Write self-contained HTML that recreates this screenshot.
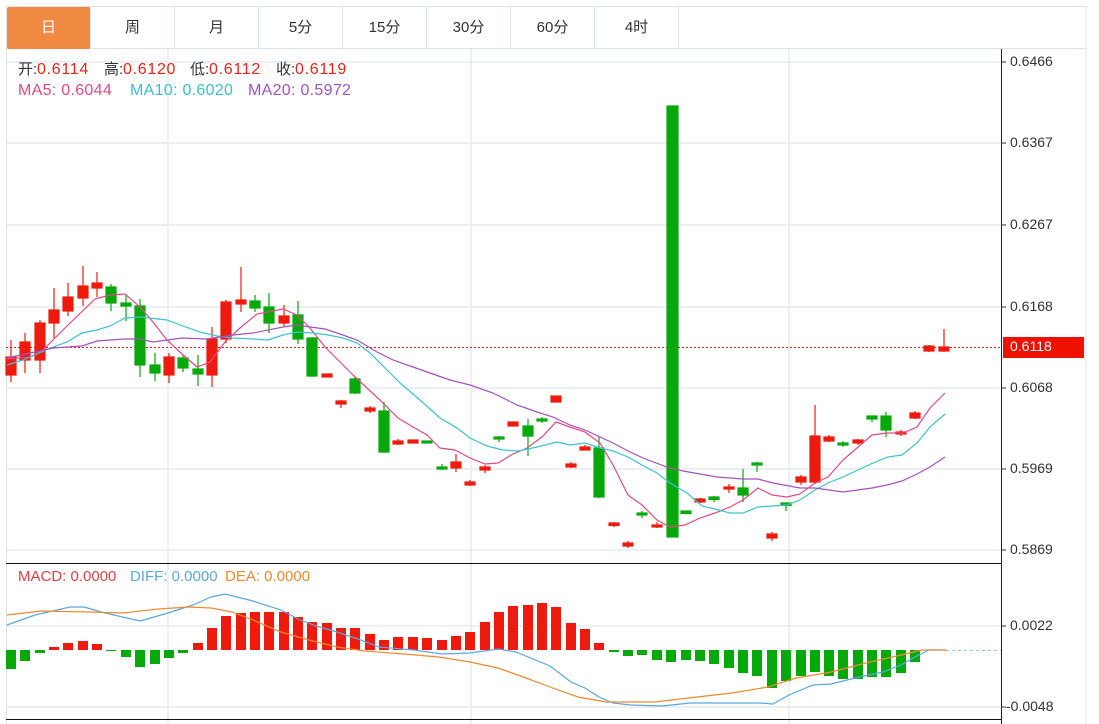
<!DOCTYPE html>
<html><head><meta charset="utf-8"><style>
*{margin:0;padding:0;box-sizing:border-box}
body{width:1099px;height:724px;background:#fff;overflow:hidden;font-family:"Liberation Sans","Noto Sans CJK SC",sans-serif;position:relative}
.tabs{position:absolute;left:6px;top:6px;width:1080px;height:43px;border-top:1px solid #dde2e8;border-bottom:1px solid #dde2e8;border-left:1px solid #dde2e8;}
.tab{position:absolute;top:0;height:42px;width:84px;border-right:1px solid #dde2e8;text-align:center;line-height:42px;font-size:15px;color:#333}
.tab.on{background:#f08a42;color:#fff;border-radius:2px}
.t{position:absolute;font-size:16px;white-space:nowrap;line-height:18px}
.r{color:#e8241a}.k{color:#333;font-size:15px}
.ax{position:absolute;left:1010px;font-size:14px;color:#333}
</style></head><body>
<div class="tabs">
<div class="tab on" style="left:0">日</div>
<div class="tab" style="left:84px">周</div>
<div class="tab" style="left:168px">月</div>
<div class="tab" style="left:252px">5分</div>
<div class="tab" style="left:336px">15分</div>
<div class="tab" style="left:420px">30分</div>
<div class="tab" style="left:504px">60分</div>
<div class="tab" style="left:588px">4时</div>
</div>
<svg width="1099" height="724" style="position:absolute;left:0;top:0" xmlns="http://www.w3.org/2000/svg">
<g stroke="#e6ecf2" stroke-width="1.5">
<line x1="6" y1="62" x2="1001" y2="62"/><line x1="6" y1="143" x2="1001" y2="143"/><line x1="6" y1="225" x2="1001" y2="225"/><line x1="6" y1="307" x2="1001" y2="307"/><line x1="6" y1="388" x2="1001" y2="388"/><line x1="6" y1="469" x2="1001" y2="469"/><line x1="6" y1="550" x2="1001" y2="550"/>
<line x1="6" y1="626" x2="1001" y2="626"/><line x1="6" y1="707" x2="1001" y2="707"/>
<line x1="168" y1="49" x2="168" y2="724"/><line x1="471" y1="49" x2="471" y2="724"/><line x1="789" y1="49" x2="789" y2="724"/>
</g>
<line x1="6.5" y1="49" x2="6.5" y2="724" stroke="#dde2e8"/>
<line x1="1086" y1="6" x2="1086" y2="724" stroke="#dde2e8"/>
<line x1="6" y1="563.5" x2="1001" y2="563.5" stroke="#111"/>
<line x1="6" y1="719.5" x2="1001" y2="719.5" stroke="#111"/>
<line x1="1001.5" y1="49" x2="1001.5" y2="724" stroke="#222"/>
<g stroke="#333"><line x1="1001" y1="62" x2="1006" y2="62"/><line x1="1001" y1="143" x2="1006" y2="143"/><line x1="1001" y1="225" x2="1006" y2="225"/><line x1="1001" y1="307" x2="1006" y2="307"/><line x1="1001" y1="388" x2="1006" y2="388"/><line x1="1001" y1="469" x2="1006" y2="469"/><line x1="1001" y1="550" x2="1006" y2="550"/><line x1="1001" y1="626" x2="1006" y2="626"/><line x1="1001" y1="707" x2="1006" y2="707"/></g>
<line x1="6" y1="347.5" x2="1001" y2="347.5" stroke="#e02020" stroke-dasharray="2,2"/>
<rect x="1003" y="337" width="81" height="21" fill="#ee1100"/>
<g stroke-width="1.2">
<g fill="#ee1a0e" stroke="#ee1a0e">
<line x1="11" y1="340" x2="11" y2="382"/><rect x="6" y="357" width="10" height="18"/>
<line x1="25" y1="333" x2="25" y2="373"/><rect x="20" y="342" width="10" height="18"/>
<line x1="40" y1="320" x2="40" y2="373"/><rect x="35" y="323" width="10" height="37"/>
<line x1="54" y1="288" x2="54" y2="338"/><rect x="49" y="310" width="10" height="13"/>
<line x1="68" y1="283" x2="68" y2="316"/><rect x="63" y="297" width="10" height="14"/>
<line x1="83" y1="266" x2="83" y2="306"/><rect x="78" y="286" width="10" height="12"/>
<line x1="97" y1="272" x2="97" y2="297"/><rect x="92" y="283" width="10" height="5"/>
<line x1="169" y1="353" x2="169" y2="383"/><rect x="164" y="357" width="10" height="18"/>
<line x1="212" y1="327" x2="212" y2="387"/><rect x="207" y="339" width="10" height="36"/>
<line x1="226" y1="300" x2="226" y2="343"/><rect x="221" y="302" width="10" height="37"/>
<line x1="241" y1="267" x2="241" y2="312"/><rect x="236" y="300" width="10" height="4"/>
<line x1="284" y1="305" x2="284" y2="326"/><rect x="279" y="316" width="10" height="7"/>
<rect x="322" y="374" width="10" height="3"/>
<line x1="341" y1="400" x2="341" y2="408"/><rect x="336" y="401" width="10" height="3"/>
<line x1="370" y1="406" x2="370" y2="413"/><rect x="365" y="408" width="10" height="3"/>
<line x1="398" y1="439" x2="398" y2="445"/><rect x="393" y="441" width="10" height="3"/>
<rect x="408" y="440" width="10" height="3"/>
<line x1="456" y1="454" x2="456" y2="472"/><rect x="451" y="462" width="10" height="6"/>
<line x1="470" y1="480" x2="470" y2="486"/><rect x="465" y="482" width="10" height="3"/>
<line x1="485" y1="465" x2="485" y2="473"/><rect x="480" y="467" width="10" height="3"/>
<rect x="508" y="422" width="10" height="4"/>
<rect x="551" y="396" width="10" height="6"/>
<line x1="571" y1="462" x2="571" y2="468"/><rect x="566" y="464" width="10" height="3"/>
<line x1="585" y1="445" x2="585" y2="450"/><rect x="580" y="447" width="10" height="3"/>
<line x1="614" y1="522" x2="614" y2="527"/><rect x="609" y="523" width="10" height="2.5"/>
<line x1="628" y1="541" x2="628" y2="548"/><rect x="623" y="543" width="10" height="3"/>
<line x1="657" y1="522" x2="657" y2="528"/><rect x="652" y="525" width="10" height="2"/>
<line x1="700" y1="498" x2="700" y2="503"/><rect x="695" y="499" width="10" height="3"/>
<line x1="729" y1="484" x2="729" y2="493"/><rect x="724" y="487" width="10" height="2"/>
<line x1="772" y1="532" x2="772" y2="541"/><rect x="767" y="534" width="10" height="4"/>
<line x1="801" y1="475" x2="801" y2="485"/><rect x="796" y="477" width="10" height="5"/>
<line x1="815" y1="405" x2="815" y2="484"/><rect x="810" y="436" width="10" height="46"/>
<line x1="829" y1="435" x2="829" y2="442"/><rect x="824" y="437" width="10" height="4"/>
<line x1="858" y1="439" x2="858" y2="445"/><rect x="853" y="440" width="10" height="3"/>
<line x1="901" y1="430" x2="901" y2="436"/><rect x="896" y="432" width="10" height="2"/>
<line x1="915" y1="411" x2="915" y2="419"/><rect x="910" y="413" width="10" height="5"/>
<line x1="929" y1="345" x2="929" y2="352"/><rect x="924" y="346" width="10" height="5"/>
<line x1="944" y1="329" x2="944" y2="352"/><rect x="939" y="347" width="10" height="4"/>
</g>
<g fill="#06a80a" stroke="#06a80a">
<line x1="111" y1="284" x2="111" y2="311"/><rect x="106" y="287" width="10" height="16"/>
<line x1="126" y1="295" x2="126" y2="321"/><rect x="121" y="303" width="10" height="3"/>
<line x1="140" y1="299" x2="140" y2="377"/><rect x="135" y="306" width="10" height="59"/>
<line x1="155" y1="353" x2="155" y2="381"/><rect x="150" y="365" width="10" height="8"/>
<line x1="183" y1="355" x2="183" y2="372"/><rect x="178" y="358" width="10" height="10"/>
<line x1="198" y1="355" x2="198" y2="386"/><rect x="193" y="369" width="10" height="5"/>
<line x1="255" y1="295" x2="255" y2="312"/><rect x="250" y="301" width="10" height="7"/>
<line x1="269" y1="293" x2="269" y2="333"/><rect x="264" y="307" width="10" height="16"/>
<line x1="298" y1="301" x2="298" y2="344"/><rect x="293" y="315" width="10" height="24"/>
<line x1="312" y1="337" x2="312" y2="377"/><rect x="307" y="338" width="10" height="38"/>
<line x1="355" y1="377" x2="355" y2="394"/><rect x="350" y="379" width="10" height="14"/>
<line x1="384" y1="402" x2="384" y2="453"/><rect x="379" y="411" width="10" height="41"/>
<rect x="422" y="441" width="10" height="2"/>
<line x1="442" y1="464" x2="442" y2="470"/><rect x="437" y="467" width="10" height="2"/>
<line x1="499" y1="436" x2="499" y2="442"/><rect x="494" y="437" width="10" height="2"/>
<line x1="528" y1="419" x2="528" y2="456"/><rect x="523" y="426" width="10" height="10"/>
<line x1="542" y1="417" x2="542" y2="423"/><rect x="537" y="419" width="10" height="2"/>
<line x1="599" y1="437" x2="599" y2="498"/><rect x="594" y="448" width="10" height="49"/>
<line x1="642" y1="511" x2="642" y2="518"/><rect x="637" y="513" width="10" height="2"/>
<rect x="667" y="106" width="11" height="431"/>
<rect x="681" y="511" width="10" height="2.5"/>
<line x1="714" y1="496" x2="714" y2="502"/><rect x="709" y="497" width="10" height="2.5"/>
<line x1="743" y1="469" x2="743" y2="502"/><rect x="738" y="488" width="10" height="7"/>
<line x1="757" y1="462" x2="757" y2="472"/><rect x="752" y="463" width="10" height="2"/>
<line x1="786" y1="503" x2="786" y2="511"/><rect x="781" y="503" width="10" height="2.5"/>
<line x1="843" y1="441" x2="843" y2="447"/><rect x="838" y="443" width="10" height="2"/>
<line x1="872" y1="416" x2="872" y2="422"/><rect x="867" y="416" width="10" height="3"/>
<line x1="886" y1="412" x2="886" y2="437"/><rect x="881" y="416" width="10" height="14"/>
</g>
</g>
<g fill="none" stroke-width="1.2">
<polyline stroke="#e04a82" points="7,359 30,357 43,350 68,325 95,299 110,295 125,294 140,307 153,322 167,340 182,354 197,367 210,362 225,342 240,328 257,314 268,312 283,309 297,315 310,328 325,347 340,362 353,375 367,388 383,403 398,418 413,427 427,435 440,448 455,450 470,458 485,464 498,463 513,454 527,448 542,437 556,422 570,427 585,432 600,443 613,465 628,495 642,505 657,520 670,527 685,525 700,518 715,513 730,507 743,500 758,488 772,495 787,497 800,494 815,483 828,477 843,460 857,448 872,435 887,433 903,433 917,427 930,408 945,393"/>
<polyline stroke="#3cc2d2" points="7,365 23,360 53,347 67,342 82,333 97,330 110,326 125,318 140,317 167,320 183,326 200,332 217,336 233,338 253,339 268,340 283,335 297,332 313,333 328,335 343,338 357,343 370,353 387,370 400,383 420,400 440,418 457,428 470,438 487,446 503,450 518,451 537,447 557,442 570,445 585,443 600,448 613,451 628,457 642,465 657,473 670,483 687,493 702,506 715,509 730,513 743,513 758,507 787,505 800,500 815,490 828,483 843,477 858,470 873,463 888,457 902,455 917,443 930,427 945,414"/>
<polyline stroke="#a452bc" points="7,358 53,348 82,346 97,341 125,339 140,339 153,342 182,338 207,339 233,335 253,333 283,327 297,325 310,327 325,329 340,334 357,340 377,352 393,360 413,367 450,380 470,385 493,393 517,405 537,412 553,417 570,425 585,430 600,437 613,443 628,451 643,458 667,467 683,471 700,474 717,477 743,479 758,479 773,483 800,488 815,488 843,492 872,488 887,485 902,481 917,474 930,467 945,457"/>
</g>
<g fill="#ee1a0e">
<rect x="49" y="647" width="10" height="3"/><rect x="63" y="643" width="10" height="7"/><rect x="78" y="641" width="10" height="9"/><rect x="92" y="644" width="10" height="6"/>
<rect x="193" y="643" width="10" height="7"/><rect x="207" y="628" width="10" height="22"/><rect x="221" y="616" width="10" height="34"/><rect x="236" y="613" width="10" height="37"/><rect x="250" y="612" width="10" height="38"/><rect x="264" y="612" width="10" height="38"/><rect x="279" y="612" width="10" height="38"/><rect x="293" y="617" width="10" height="33"/><rect x="307" y="622" width="10" height="28"/><rect x="322" y="623" width="10" height="27"/><rect x="336" y="628" width="10" height="22"/><rect x="350" y="628" width="10" height="22"/><rect x="365" y="634" width="10" height="16"/><rect x="379" y="640" width="10" height="10"/><rect x="393" y="637" width="10" height="13"/><rect x="408" y="637" width="10" height="13"/><rect x="422" y="638" width="10" height="12"/><rect x="437" y="640" width="10" height="10"/><rect x="451" y="636" width="10" height="14"/><rect x="465" y="632" width="10" height="18"/><rect x="480" y="622" width="10" height="28"/><rect x="494" y="612" width="10" height="38"/><rect x="508" y="606" width="10" height="44"/><rect x="523" y="605" width="10" height="45"/><rect x="537" y="603" width="10" height="47"/><rect x="551" y="607" width="10" height="43"/><rect x="566" y="623" width="10" height="27"/><rect x="580" y="629" width="10" height="21"/><rect x="594" y="643" width="10" height="7"/>
</g>
<g fill="#06a80a">
<rect x="6" y="650" width="10" height="19"/><rect x="20" y="650" width="10" height="11"/><rect x="35" y="650" width="10" height="3"/><rect x="106" y="650" width="10" height="1"/><rect x="121" y="650" width="10" height="7"/><rect x="135" y="650" width="10" height="17"/><rect x="150" y="650" width="10" height="14"/><rect x="164" y="650" width="10" height="8"/><rect x="178" y="650" width="10" height="3"/>
<rect x="609" y="650" width="10" height="2"/><rect x="623" y="650" width="10" height="6"/><rect x="637" y="650" width="10" height="5"/><rect x="652" y="650" width="10" height="10"/><rect x="666" y="650" width="10" height="12"/><rect x="681" y="650" width="10" height="10"/><rect x="695" y="650" width="10" height="11"/><rect x="709" y="650" width="10" height="14"/><rect x="724" y="650" width="10" height="18"/><rect x="738" y="650" width="10" height="23"/><rect x="752" y="650" width="10" height="26"/><rect x="767" y="650" width="10" height="38"/><rect x="781" y="650" width="10" height="31"/><rect x="796" y="650" width="10" height="26"/><rect x="810" y="650" width="10" height="22"/><rect x="824" y="650" width="10" height="26"/><rect x="838" y="650" width="10" height="29"/><rect x="853" y="650" width="10" height="29"/><rect x="867" y="650" width="10" height="27"/><rect x="881" y="650" width="10" height="27"/><rect x="896" y="650" width="10" height="23"/><rect x="910" y="650" width="10" height="12"/>
</g>
<line x1="946" y1="650.5" x2="1001" y2="650.5" stroke="#8cc4ec" stroke-dasharray="3,3"/>
<g fill="none" stroke-width="1.2">
<polyline stroke="#5aa8e2" points="7,625 35,615 70,607 84,607 105,613 140,621 168,613 193,605 211,597 225,594 253,601 281,610 298,619 316,626 337,632 358,639 379,647 414,650 442,654 470,653 498,649 516,652 550,666 571,682 585,688 599,697 613,703 631,705 662,706 690,703 725,703 760,703 773,704 789,695 813,685 831,684 855,678 883,672 901,665 915,657 929,650 946,650"/>
<polyline stroke="#f08a30" points="7,615 42,611 88,612 123,613 158,609 189,607 211,608 232,612 253,620 281,632 309,640 337,647 365,651 404,654 439,657 470,662 498,668 526,678 550,687 578,697 606,702 655,702 697,697 732,693 768,687 796,678 831,672 866,663 901,655 922,650 946,650"/>
</g>
</svg>
<div class="t k" style="left:18px;top:61px">开:</div><div class="t r" style="left:37px;top:61px;letter-spacing:0.7px">0.6114</div>
<div class="t k" style="left:104px;top:61px">高:</div><div class="t r" style="left:123px;top:61px;letter-spacing:0.7px">0.6120</div>
<div class="t k" style="left:190px;top:61px">低:</div><div class="t r" style="left:209px;top:61px;letter-spacing:0.7px">0.6112</div>
<div class="t k" style="left:276px;top:61px">收:</div><div class="t r" style="left:295px;top:61px;letter-spacing:0.7px">0.6119</div>
<div class="t" style="left:18px;top:82px;color:#e04a82;letter-spacing:0.3px">MA5: 0.6044</div>
<div class="t" style="left:130px;top:82px;color:#3bbfd0;letter-spacing:0.3px">MA10: 0.6020</div>
<div class="t" style="left:248px;top:82px;color:#a452bc;letter-spacing:0.3px">MA20: 0.5972</div>
<div class="t" style="left:18px;top:568px;font-size:15px;color:#e04040">MACD: 0.0000</div>
<div class="t" style="left:130px;top:568px;font-size:15px;color:#5aa8e2">DIFF: 0.0000</div>
<div class="t" style="left:225px;top:568px;font-size:15px;color:#f08a30">DEA: 0.0000</div>
<div class="ax" style="top:53px">0.6466</div>
<div class="ax" style="top:134px">0.6367</div>
<div class="ax" style="top:216px">0.6267</div>
<div class="ax" style="top:298px">0.6168</div>
<div class="ax" style="top:338px;color:#fff">0.6118</div>
<div class="ax" style="top:379px">0.6068</div>
<div class="ax" style="top:460px">0.5969</div>
<div class="ax" style="top:541px">0.5869</div>
<div class="ax" style="top:617px">0.0022</div>
<div class="ax" style="top:698px;left:1006px">-0.0048</div>
</body></html>
